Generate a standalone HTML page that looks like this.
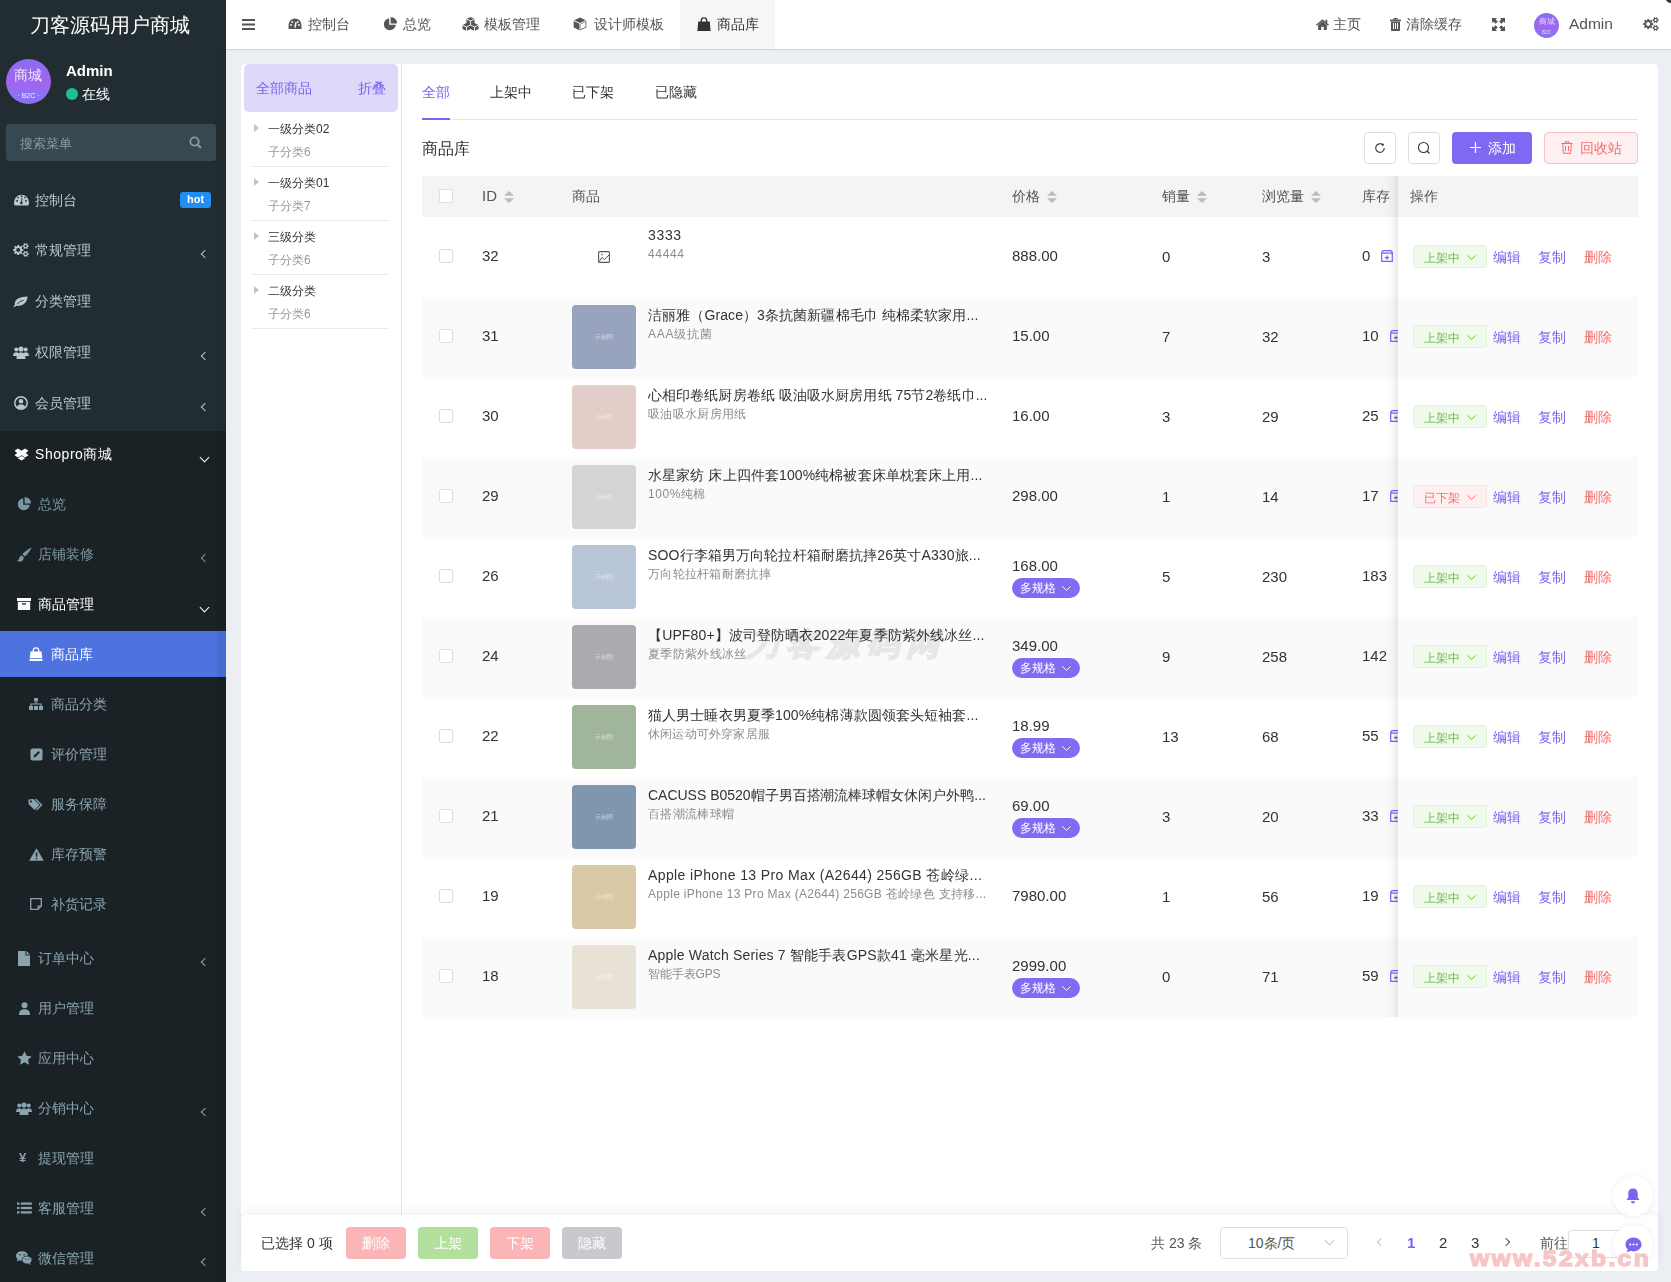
<!DOCTYPE html>
<html><head><meta charset="utf-8">
<style>
*{box-sizing:border-box;margin:0;padding:0}
html,body{width:1671px;height:1282px;overflow:hidden}
body{position:relative;background:#ebeef3;font-family:"Liberation Sans",sans-serif;font-size:14px;color:#333}
.a{position:absolute}
.t{position:absolute;white-space:nowrap}
svg{display:block}
#sb{left:0;top:0;width:226px;height:1282px;background:#222d32}
#sb .dk{left:0;top:431px;width:226px;height:851px;background:#1a2226}
#sb .strip{left:217px;top:49px;width:9px;height:1233px;background:rgba(0,0,0,.055)}
.chev{position:absolute;width:6px;height:6px;border-left:1.5px solid #b8c7ce;border-bottom:1.5px solid #b8c7ce;transform:rotate(45deg)}
.chevd{position:absolute;width:7px;height:7px;border-left:1.8px solid #fff;border-bottom:1.8px solid #fff;transform:rotate(-45deg)}
#nav{left:226px;top:0;width:1445px;height:49px;background:#fff;box-shadow:0 1px 1px rgba(0,0,0,.1)}
.cb{position:absolute;width:14px;height:14px;border:1px solid #dcdfe6;border-radius:2px;background:#fff}
.img{position:absolute;width:64px;height:64px;border-radius:4px}
.img span{position:absolute;left:0;top:26px;width:64px;text-align:center;font-size:6px;color:rgba(255,255,255,.55);line-height:12px}
.tag{position:absolute;height:20px;width:68px;border-radius:10px;background:#7f6cf3;color:#fff;font-size:12px;line-height:20px;padding-left:8px}
.tag svg{position:absolute;left:50px;top:8px}
.st{position:absolute;width:74px;height:23px;border-radius:3px;font-size:12px;line-height:24px;padding-left:10px}
.st.on{background:#f0f9eb;border:1px solid #e1f3d8;color:#67c23a}
.st.off{background:#fef0f0;border:1px solid #fde2e2;color:#f56c6c}
.st svg{position:absolute;left:53px;top:8.5px}

</style></head><body>

<div id="sb" class="a">
<div class="a dk"></div>
<div class="t " style="left:30px;top:13.0px;line-height:24px;height:24px;font-size:20px;color:#fff">刀客源码用户商城</div>
<div class="a" style="left:6px;top:59px;width:45px;height:45px;border-radius:50%;background:linear-gradient(180deg,#8b6cf1 0%,#a265ee 60%,#b061ec 64%,#8f70f3 66%,#8a6ff2 100%);overflow:hidden">
<div class="t" style="left:8px;top:8px;font-size:14px;line-height:16px;height:16px;color:rgba(255,255,255,.85)">商城</div>
<div class="t" style="left:0;top:32px;width:45px;text-align:center;font-size:7px;line-height:9px;height:9px;color:rgba(255,255,255,.9)">·&nbsp;B2C&nbsp;·</div>
</div>
<div class="t " style="left:66px;top:61.0px;line-height:20px;height:20px;font-weight:bold;color:#fff;font-size:15px">Admin</div>
<div class="a" style="left:66px;top:88px;width:12px;height:12px;border-radius:50%;background:#1fbf94"></div>
<div class="t " style="left:82px;top:84.0px;line-height:20px;height:20px;color:#fff;font-size:14px">在线</div>
<div class="a" style="left:6px;top:124px;width:210px;height:37px;background:#374850;border-radius:3px"></div>
<div class="t " style="left:20px;top:134.0px;line-height:20px;height:20px;color:#8b9ba2;font-size:13px">搜索菜单</div>
<svg class="a" style="left:189px;top:136px" width="13" height="13" viewBox="0 0 13 13"><circle cx="5.5" cy="5.5" r="4.2" fill="none" stroke="#8b9ba2" stroke-width="1.8"/><path d="M8.5 8.5 L12 12" stroke="#8b9ba2" stroke-width="2"/></svg>
<div class="a" style="left:0;top:631px;width:226px;height:46px;background:#4e73df"></div>
<div class="a strip"></div>
<div class="a" style="left:13.6px;top:193.5px"><svg width="15" height="12" viewBox="0 0 15 12"><path d="M0.6 11.4 C0.2 10.4 0 9.4 0 8.2 A7.5 7.5 0 0 1 15 8.2 C15 9.4 14.8 10.4 14.4 11.4z" fill="#b8c7ce"/><rect x="6.8" y="1.4" width="1.4" height="1.8" fill="#222d32"/><rect x="2.2" y="6.2" width="1.8" height="1.4" fill="#222d32"/><rect x="11" y="6.2" width="1.8" height="1.4" fill="#222d32"/><circle cx="4" cy="3.6" r="0.8" fill="#222d32"/><circle cx="11" cy="3.6" r="0.8" fill="#222d32"/><path d="M7.5 9 L8 4.2" stroke="#222d32" stroke-width="0.9"/><circle cx="7.4" cy="9" r="1.3" fill="#222d32"/></svg></div>
<div class="t " style="left:35px;top:189.5px;line-height:20px;height:20px;color:#b8c7ce;font-size:14px">控制台</div>
<div class="a" style="left:180px;top:192px;width:31px;height:16px;border-radius:3px;background:#1f8ff4;color:#fff;font-weight:bold;font-size:11px;line-height:14px;text-align:center">hot</div>
<div class="a" style="left:13px;top:243.0px"><svg width="16" height="14" viewBox="0 0 16 14"><path fill-rule="evenodd" d="M10.3 6.0 L10.3 8.0 L9.0 8.1 L8.4 9.2 L9.5 9.9 L8.1 11.3 L7.1 10.4 L6.0 10.8 L6.2 12.1 L4.2 12.1 L4.1 10.8 L3.0 10.2 L2.3 11.3 L0.9 9.9 L1.8 8.9 L1.4 7.8 L0.1 8.0 L0.1 6.0 L1.4 5.9 L2.0 4.8 L0.9 4.1 L2.3 2.7 L3.3 3.6 L4.4 3.2 L4.2 1.9 L6.2 1.9 L6.3 3.2 L7.4 3.8 L8.1 2.7 L9.5 4.1 L8.6 5.1 L9.0 6.2z M7.2 7.0 A2.0 2.0 0 1 0 3.2 7.0 A2.0 2.0 0 1 0 7.2 7.0z" fill="#b8c7ce"/><path fill-rule="evenodd" d="M15.6 2.3 L15.6 3.9 L14.7 3.9 L14.2 4.7 L14.8 5.3 L13.4 6.1 L12.9 5.3 L12.0 5.2 L11.8 6.1 L10.4 5.3 L10.9 4.5 L10.5 3.7 L9.6 3.9 L9.6 2.3 L10.5 2.3 L11.0 1.5 L10.4 0.9 L11.8 0.1 L12.3 0.9 L13.2 1.0 L13.4 0.1 L14.8 0.9 L14.3 1.7 L14.7 2.5z M13.7 3.1 A1.1 1.1 0 1 0 11.5 3.1 A1.1 1.1 0 1 0 13.7 3.1z" fill="#b8c7ce"/><path fill-rule="evenodd" d="M15.6 10.1 L15.6 11.7 L14.7 11.7 L14.2 12.5 L14.8 13.1 L13.4 13.9 L12.9 13.1 L12.0 13.0 L11.8 13.9 L10.4 13.1 L10.9 12.3 L10.5 11.5 L9.6 11.7 L9.6 10.1 L10.5 10.1 L11.0 9.3 L10.4 8.7 L11.8 7.9 L12.3 8.7 L13.2 8.8 L13.4 7.9 L14.8 8.7 L14.3 9.5 L14.7 10.3z M13.7 10.9 A1.1 1.1 0 1 0 11.5 10.9 A1.1 1.1 0 1 0 13.7 10.9z" fill="#b8c7ce"/></svg></div>
<div class="t " style="left:35px;top:240.0px;line-height:20px;height:20px;color:#b8c7ce;font-size:14px">常规管理</div>
<div class="chev" style="left:202px;top:251px;border-color:#b8c7ce"></div>
<div class="a" style="left:13.4px;top:295.5px"><svg width="15" height="11" viewBox="0 0 15 11"><path d="M0.3 10.6 L1.8 9 C1.2 4.5 5 0.8 14.6 0.6 C14.4 5.8 10.8 10.6 3.6 9.8 L1.6 10.9z" fill="#b8c7ce"/><path d="M4.2 8.2 C5.8 6 7.6 5 10.6 4.4" stroke="#222d32" stroke-width="0.9" fill="none"/></svg></div>
<div class="t " style="left:35px;top:291.0px;line-height:20px;height:20px;color:#b8c7ce;font-size:14px">分类管理</div>
<div class="a" style="left:13px;top:345.5px"><svg width="16" height="13" viewBox="0 0 16 13"><circle cx="3.3" cy="3.6" r="2" fill="#b8c7ce"/><circle cx="12.7" cy="3.6" r="2" fill="#b8c7ce"/><path d="M0 10 C0 7 1.5 6.2 3.5 6.2 C5 6.2 5.5 7 5.5 10z M16 10 C16 7 14.5 6.2 12.5 6.2 C11 6.2 10.5 7 10.5 10z" fill="#b8c7ce"/><circle cx="8" cy="3" r="2.6" fill="#b8c7ce"/><path d="M3.5 13 C3.5 8 5 6.6 8 6.6 C11 6.6 12.5 8 12.5 13z" fill="#b8c7ce"/></svg></div>
<div class="t " style="left:35px;top:342.0px;line-height:20px;height:20px;color:#b8c7ce;font-size:14px">权限管理</div>
<div class="chev" style="left:202px;top:353px;border-color:#b8c7ce"></div>
<div class="a" style="left:14px;top:396.0px"><svg width="14" height="14" viewBox="0 0 14 14"><circle cx="7" cy="7" r="6.2" fill="none" stroke="#b8c7ce" stroke-width="1.5"/><circle cx="7" cy="5.3" r="2.3" fill="#b8c7ce"/><path d="M2.8 11.3 C3.6 9 5 8.6 7 8.6 C9 8.6 10.4 9 11.2 11.3 C10 12.5 8.6 13 7 13 C5.4 13 4 12.5 2.8 11.3z" fill="#b8c7ce"/></svg></div>
<div class="t " style="left:35px;top:393.0px;line-height:20px;height:20px;color:#b8c7ce;font-size:14px">会员管理</div>
<div class="chev" style="left:202px;top:404px;border-color:#b8c7ce"></div>
<div class="a" style="left:14px;top:447.5px"><svg width="15" height="13" viewBox="0 0 15 13"><path d="M4 0.5 L0.5 2.8 L3.2 5 L0.5 7.2 L4 9.4 L7.5 7.2 L4.8 5 L7.5 2.8z M11 0.5 L7.5 2.8 L10.2 5 L7.5 7.2 L11 9.4 L14.5 7.2 L11.8 5 L14.5 2.8z M7.5 2.8 L10.2 5 L7.5 7.2 L4.8 5z" fill="#fff"/><path d="M3.8 10.2 L7.5 8 L11.2 10.2 L7.5 12.6z" fill="#fff"/></svg></div>
<div class="t " style="left:35px;top:444.0px;line-height:20px;height:20px;color:#fff;font-size:14px;letter-spacing:0.55px">Shopro商城</div>
<div class="chevd" style="left:201px;top:454px"></div>
<div class="a" style="left:17px;top:497.0px"><svg width="14" height="14" viewBox="0 0 14 14"><path d="M6.2 1.2 A6 6 0 1 0 12.8 7.8 L6.2 7.8z" fill="#7b96a3"/><path d="M7.6 0 A6.4 6.4 0 0 1 14 6.4 L7.6 6.4z" fill="#7b96a3"/></svg></div>
<div class="t " style="left:38px;top:494.0px;line-height:20px;height:20px;color:#7b96a3;font-size:14px">总览</div>
<div class="a" style="left:16.5px;top:546.5px"><svg width="15" height="15" viewBox="0 0 15 15"><path d="M14.6 0.6 C13.8 2.8 10.6 7.2 8 9.6 L5.4 7.2 C8 4.6 12.4 1.4 14.6 0.6z" fill="#7b96a3"/><path d="M5 8.6 L6.8 10.2 C6.8 13.2 4.8 14.6 2.8 14.6 C1.4 14.6 0.4 13.8 0.2 13.2 C1.6 13.2 2 12.4 2.3 11 C2.6 9.6 3.6 8.6 5 8.6z" fill="#7b96a3"/></svg></div>
<div class="t " style="left:38px;top:544.0px;line-height:20px;height:20px;color:#7b96a3;font-size:14px">店铺装修</div>
<div class="chev" style="left:202px;top:555px;border-color:#7b96a3"></div>
<div class="a" style="left:17px;top:598.0px"><svg width="14" height="12" viewBox="0 0 14 12"><rect x="0" y="0" width="14" height="3" fill="#fff"/><rect x="0.8" y="3.8" width="12.4" height="8.2" fill="#fff"/><rect x="5" y="5.3" width="4" height="1.3" fill="#1a2226"/></svg></div>
<div class="t " style="left:38px;top:594.0px;line-height:20px;height:20px;color:#fff;font-size:14px">商品管理</div>
<div class="chevd" style="left:201px;top:604px"></div>
<div class="a" style="left:29px;top:647.0px"><svg width="14" height="14" viewBox="0 0 14 14"><path d="M4.3 5 V3.6 A2.7 2.7 0 0 1 9.7 3.6 V5" stroke="#fff" stroke-width="1.3" fill="none"/><path d="M1.5 4.5 H12.5 L13.5 14 H0.5z" fill="#fff"/><rect x="0.6" y="11" width="12.8" height="0.8" fill="#4e73df"/></svg></div>
<div class="t " style="left:51px;top:644.0px;line-height:20px;height:20px;color:#fff;font-size:14px">商品库</div>
<div class="a" style="left:29px;top:698.0px"><svg width="14" height="12" viewBox="0 0 14 12"><rect x="5" y="0" width="4" height="3.5" fill="#8aa4af"/><path d="M7 3.5 V6 M2 8.5 V6 H12 V8.5" stroke="#8aa4af" stroke-width="1.2" fill="none"/><rect x="0" y="8" width="4" height="4" fill="#8aa4af"/><rect x="5" y="8" width="4" height="4" fill="#8aa4af"/><rect x="10" y="8" width="4" height="4" fill="#8aa4af"/></svg></div>
<div class="t " style="left:51px;top:694.0px;line-height:20px;height:20px;color:#8aa4af;font-size:14px">商品分类</div>
<div class="a" style="left:30px;top:747.5px"><svg width="13" height="13" viewBox="0 0 13 13"><rect x="0.5" y="0.5" width="12" height="12" rx="2" fill="#8aa4af"/><path d="M3.5 9.5 L4 7.5 L8.5 3 L10 4.5 L5.5 9z" fill="#1a2226"/></svg></div>
<div class="t " style="left:51px;top:744.0px;line-height:20px;height:20px;color:#8aa4af;font-size:14px">评价管理</div>
<div class="a" style="left:28px;top:797.5px"><svg width="16" height="13" viewBox="0 0 16 13"><path d="M0.5 1.5 V6 L6.5 12 L11.5 7 L5.5 1z" fill="#8aa4af"/><circle cx="3" cy="3.5" r="1.1" fill="#1a2226"/><path d="M7.5 1 L13.5 7 L8.5 12" stroke="#8aa4af" stroke-width="1.4" fill="none"/></svg></div>
<div class="t " style="left:51px;top:794.0px;line-height:20px;height:20px;color:#8aa4af;font-size:14px">服务保障</div>
<div class="a" style="left:29px;top:847.5px"><svg width="15" height="13" viewBox="0 0 15 13"><path d="M7.5 0.3 L14.8 12.8 H0.2z" fill="#8aa4af"/><rect x="6.8" y="4.3" width="1.5" height="4.5" fill="#1a2226"/><rect x="6.8" y="9.8" width="1.5" height="1.5" fill="#1a2226"/></svg></div>
<div class="t " style="left:51px;top:844.0px;line-height:20px;height:20px;color:#8aa4af;font-size:14px">库存预警</div>
<div class="a" style="left:30px;top:898.0px"><svg width="12" height="12" viewBox="0 0 12 12"><path d="M0.7 0.7 H11.3 V8 L8 11.3 H0.7z" fill="none" stroke="#8aa4af" stroke-width="1.3"/><path d="M11 8.2 H8.2 V11" fill="none" stroke="#8aa4af" stroke-width="1.2"/></svg></div>
<div class="t " style="left:51px;top:894.0px;line-height:20px;height:20px;color:#8aa4af;font-size:14px">补货记录</div>
<div class="a" style="left:18px;top:950.5px"><svg width="12" height="15" viewBox="0 0 12 15"><path d="M0 0 H7.5 V4.5 H12 V15 H0z" fill="#8aa4af"/><path d="M8.5 0 L12 3.5 H8.5z" fill="#8aa4af"/></svg></div>
<div class="t " style="left:38px;top:948.0px;line-height:20px;height:20px;color:#8aa4af;font-size:14px">订单中心</div>
<div class="chev" style="left:202px;top:959px;border-color:#8aa4af"></div>
<div class="a" style="left:19px;top:1001.5px"><svg width="11" height="13" viewBox="0 0 11 13"><circle cx="5.5" cy="3.2" r="3" fill="#8aa4af"/><path d="M0 13 C0 8.5 2 7.2 5.5 7.2 C9 7.2 11 8.5 11 13z" fill="#8aa4af"/></svg></div>
<div class="t " style="left:38px;top:998.0px;line-height:20px;height:20px;color:#8aa4af;font-size:14px">用户管理</div>
<div class="a" style="left:17px;top:1051.0px"><svg width="15" height="14" viewBox="0 0 15 14"><path d="M7.5 0.3 L9.7 4.8 L14.7 5.4 L11 8.8 L12 13.7 L7.5 11.3 L3 13.7 L4 8.8 L0.3 5.4 L5.3 4.8z" fill="#8aa4af"/></svg></div>
<div class="t " style="left:38px;top:1048.0px;line-height:20px;height:20px;color:#8aa4af;font-size:14px">应用中心</div>
<div class="a" style="left:16px;top:1101.5px"><svg width="16" height="13" viewBox="0 0 16 13"><circle cx="3.3" cy="3.6" r="2" fill="#8aa4af"/><circle cx="12.7" cy="3.6" r="2" fill="#8aa4af"/><path d="M0 10 C0 7 1.5 6.2 3.5 6.2 C5 6.2 5.5 7 5.5 10z M16 10 C16 7 14.5 6.2 12.5 6.2 C11 6.2 10.5 7 10.5 10z" fill="#8aa4af"/><circle cx="8" cy="3" r="2.6" fill="#8aa4af"/><path d="M3.5 13 C3.5 8 5 6.6 8 6.6 C11 6.6 12.5 8 12.5 13z" fill="#8aa4af"/></svg></div>
<div class="t " style="left:38px;top:1098.0px;line-height:20px;height:20px;color:#8aa4af;font-size:14px">分销中心</div>
<div class="chev" style="left:202px;top:1109px;border-color:#8aa4af"></div>
<div class="t " style="left:19px;top:1148.0px;line-height:20px;height:20px;color:#8aa4af;font-size:13px;font-weight:bold">¥</div>
<div class="t " style="left:38px;top:1148.0px;line-height:20px;height:20px;color:#8aa4af;font-size:14px">提现管理</div>
<div class="a" style="left:17px;top:1202.0px"><svg width="15" height="12" viewBox="0 0 15 12"><rect x="0" y="0.5" width="2.5" height="2.2" fill="#8aa4af"/><rect x="0" y="4.9" width="2.5" height="2.2" fill="#8aa4af"/><rect x="0" y="9.3" width="2.5" height="2.2" fill="#8aa4af"/><rect x="3.8" y="0.5" width="11" height="2.2" fill="#8aa4af"/><rect x="3.8" y="4.9" width="11" height="2.2" fill="#8aa4af"/><rect x="3.8" y="9.3" width="11" height="2.2" fill="#8aa4af"/></svg></div>
<div class="t " style="left:38px;top:1198.0px;line-height:20px;height:20px;color:#8aa4af;font-size:14px">客服管理</div>
<div class="chev" style="left:202px;top:1209px;border-color:#8aa4af"></div>
<div class="a" style="left:16px;top:1251.0px"><svg width="16" height="14" viewBox="0 0 16 14"><ellipse cx="6" cy="5" rx="6" ry="4.8" fill="#8aa4af"/><path d="M1.5 8 L1 10.5 L4 9z" fill="#8aa4af"/><ellipse cx="11" cy="9" rx="5" ry="4" fill="#8aa4af" stroke="#1a2226" stroke-width="0.8"/><path d="M14 12 L15 14 L12 12.5z" fill="#8aa4af"/><circle cx="4" cy="3.8" r="0.8" fill="#1a2226"/><circle cx="8" cy="3.8" r="0.8" fill="#1a2226"/><circle cx="9.5" cy="8" r="0.6" fill="#1a2226"/><circle cx="12.5" cy="8" r="0.6" fill="#1a2226"/></svg></div>
<div class="t " style="left:38px;top:1248.0px;line-height:20px;height:20px;color:#8aa4af;font-size:14px">微信管理</div>
<div class="chev" style="left:202px;top:1259px;border-color:#8aa4af"></div>
</div>
<div id="nav" class="a"></div>
<div class="a" style="left:680px;top:0;width:95px;height:49px;background:#f6f6f6"></div>
<div class="a" style="left:242px;top:18.5px"><svg width="13" height="11" viewBox="0 0 13 11"><rect y="0" width="13" height="2" fill="#555"/><rect y="4.5" width="13" height="2" fill="#555"/><rect y="9" width="13" height="2" fill="#555"/></svg></div>
<div class="a" style="left:288px;top:18.0px"><svg width="14" height="12" viewBox="0 0 15 13"><path d="M7.5 0.5A7 7 0 0 0 0.5 7.5v4.5h14V7.5A7 7 0 0 0 7.5 0.5z" fill="#555"/><path d="M7.5 10.5 L8.6 4.5" stroke="#fff" stroke-width="1.6"/><circle cx="3.2" cy="7.5" r="1" fill="#fff"/><circle cx="4.5" cy="4.2" r="1" fill="#fff"/><circle cx="11.8" cy="7.5" r="1" fill="#fff"/><circle cx="10.5" cy="4.2" r="1" fill="#fff"/></svg></div>
<div class="t " style="left:308px;top:14.0px;line-height:20px;height:20px;color:#555;font-size:14px">控制台</div>
<div class="a" style="left:383px;top:17.0px"><svg width="14" height="14" viewBox="0 0 14 14"><path d="M6.2 1.2 A6 6 0 1 0 12.8 7.8 L6.2 7.8z" fill="#555"/><path d="M7.6 0 A6.4 6.4 0 0 1 14 6.4 L7.6 6.4z" fill="#555"/></svg></div>
<div class="t " style="left:403px;top:14.0px;line-height:20px;height:20px;color:#555;font-size:14px">总览</div>
<div class="a" style="left:462px;top:17.0px"><svg width="17" height="14" viewBox="0 0 17 14"><path d="M8.5 0 L12.5 2 V6 L8.5 8 L4.5 6 V2z M4.5 6 L8.5 8 V12 L4.5 14 L0.5 12 V8z M12.5 6 L16.5 8 V12 L12.5 14 L8.5 12 V8z" fill="#555"/><path d="M4.5 2 L8.5 4 L12.5 2 M8.5 4 V8 M0.5 8 L4.5 10 L8.5 8 M4.5 10 V14 M8.5 8 L12.5 10 L16.5 8 M12.5 10 V14" stroke="#fff" stroke-width="0.9" fill="none"/></svg></div>
<div class="t " style="left:484px;top:14.0px;line-height:20px;height:20px;color:#555;font-size:14px">模板管理</div>
<div class="a" style="left:573px;top:17.0px"><svg width="14" height="14" viewBox="0 0 14 14"><path d="M7 0.5 L13.3 3.5 V10.5 L7 13.5 L0.7 10.5 V3.5z" fill="#555"/><path d="M0.7 3.5 L7 6.5 L13.3 3.5 M7 6.5 V13.5" stroke="#fff" stroke-width="1" fill="none"/><path d="M7.8 7.2 L12.5 5 V10 L7.8 12.3z" fill="#fff"/></svg></div>
<div class="t " style="left:594px;top:14.0px;line-height:20px;height:20px;color:#555;font-size:14px">设计师模板</div>
<div class="a" style="left:697px;top:17.0px"><svg width="14" height="14" viewBox="0 0 14 14"><path d="M4.3 5 V3.6 A2.7 2.7 0 0 1 9.7 3.6 V5" stroke="#333" stroke-width="1.4" fill="none"/><path d="M1.2 4.6 H12.8 L13.6 14 H0.4z" fill="#333"/></svg></div>
<div class="t " style="left:717px;top:14.0px;line-height:20px;height:20px;color:#333;font-size:14px">商品库</div>
<div class="a" style="left:1316px;top:18.5px"><svg width="13" height="11" viewBox="0 0 13 11"><path d="M6.5 0.3 L13 5.8 L12 6.8 L6.5 2.2 L1 6.8 L0 5.8z" fill="#555"/><path d="M2.2 6 L6.5 2.6 L10.8 6 V11 H7.8 V7.8 H5.2 V11 H2.2z" fill="#555"/><rect x="9.5" y="0.8" width="1.8" height="3" fill="#555"/></svg></div>
<div class="t " style="left:1333px;top:14.0px;line-height:20px;height:20px;color:#555;font-size:14px">主页</div>
<div class="a" style="left:1390px;top:17.5px"><svg width="11" height="13" viewBox="0 0 11 13"><rect x="0" y="1.6" width="11" height="1.6" fill="#555"/><rect x="3.5" y="0" width="4" height="1.6" fill="#555"/><path d="M1 3.6 H10 V12 A1 1 0 0 1 9 13 H2 A1 1 0 0 1 1 12z" fill="#555"/><rect x="3" y="5" width="1" height="6" fill="#fff"/><rect x="5" y="5" width="1" height="6" fill="#fff"/><rect x="7" y="5" width="1" height="6" fill="#fff"/></svg></div>
<div class="t " style="left:1406px;top:14.0px;line-height:20px;height:20px;color:#555;font-size:14px">清除缓存</div>
<div class="a" style="left:1492px;top:17.5px"><svg width="13" height="13" viewBox="0 0 13 13"><path d="M0 0 H5 L3.6 1.4 L5.8 3.6 L3.6 5.8 L1.4 3.6 L0 5z M13 0 V5 L11.6 3.6 L9.4 5.8 L7.2 3.6 L9.4 1.4 L8 0z M0 13 V8 L1.4 9.4 L3.6 7.2 L5.8 9.4 L3.6 11.6 L5 13z M13 13 H8 L9.4 11.6 L7.2 9.4 L9.4 7.2 L11.6 9.4 L13 8z" fill="#555"/></svg></div>
<div class="a" style="left:1534px;top:13px;width:25px;height:25px;border-radius:50%;overflow:hidden;background:linear-gradient(180deg,#8b6cf1 0%,#a265ee 62%,#b061ec 66%,#8f70f3 68%,#8a6ff2 100%)">
<div class="t" style="left:4.5px;top:4px;font-size:8px;line-height:10px;height:10px;color:rgba(255,255,255,.75)">商城</div><div class="t" style="left:0;top:16px;width:25px;text-align:center;font-size:5px;line-height:6px;height:6px;color:rgba(255,255,255,.7)">B2C</div></div>
<div class="t " style="left:1569px;top:13.5px;line-height:20px;height:20px;color:#555;font-size:15.5px">Admin</div>
<div class="a" style="left:1643px;top:17.0px"><svg width="16" height="14" viewBox="0 0 16 14"><path fill-rule="evenodd" d="M10.3 6.0 L10.3 8.0 L9.0 8.1 L8.4 9.2 L9.5 9.9 L8.1 11.3 L7.1 10.4 L6.0 10.8 L6.2 12.1 L4.2 12.1 L4.1 10.8 L3.0 10.2 L2.3 11.3 L0.9 9.9 L1.8 8.9 L1.4 7.8 L0.1 8.0 L0.1 6.0 L1.4 5.9 L2.0 4.8 L0.9 4.1 L2.3 2.7 L3.3 3.6 L4.4 3.2 L4.2 1.9 L6.2 1.9 L6.3 3.2 L7.4 3.8 L8.1 2.7 L9.5 4.1 L8.6 5.1 L9.0 6.2z M7.2 7.0 A2.0 2.0 0 1 0 3.2 7.0 A2.0 2.0 0 1 0 7.2 7.0z" fill="#555"/><path fill-rule="evenodd" d="M15.6 2.3 L15.6 3.9 L14.7 3.9 L14.2 4.7 L14.8 5.3 L13.4 6.1 L12.9 5.3 L12.0 5.2 L11.8 6.1 L10.4 5.3 L10.9 4.5 L10.5 3.7 L9.6 3.9 L9.6 2.3 L10.5 2.3 L11.0 1.5 L10.4 0.9 L11.8 0.1 L12.3 0.9 L13.2 1.0 L13.4 0.1 L14.8 0.9 L14.3 1.7 L14.7 2.5z M13.7 3.1 A1.1 1.1 0 1 0 11.5 3.1 A1.1 1.1 0 1 0 13.7 3.1z" fill="#555"/><path fill-rule="evenodd" d="M15.6 10.1 L15.6 11.7 L14.7 11.7 L14.2 12.5 L14.8 13.1 L13.4 13.9 L12.9 13.1 L12.0 13.0 L11.8 13.9 L10.4 13.1 L10.9 12.3 L10.5 11.5 L9.6 11.7 L9.6 10.1 L10.5 10.1 L11.0 9.3 L10.4 8.7 L11.8 7.9 L12.3 8.7 L13.2 8.8 L13.4 7.9 L14.8 8.7 L14.3 9.5 L14.7 10.3z M13.7 10.9 A1.1 1.1 0 1 0 11.5 10.9 A1.1 1.1 0 1 0 13.7 10.9z" fill="#555"/></svg></div>
<div class="a" style="left:241px;top:64px;width:161px;height:1151px;background:#fff;border-radius:4px 0 0 0;border-right:1px solid #e2e2e2"></div>
<div class="a" style="left:244px;top:64px;width:154px;height:48px;background:#ded8f9;border-radius:5px"></div>
<div class="t " style="left:256px;top:78.0px;line-height:20px;height:20px;color:#7b62f0;font-size:14px">全部商品</div>
<div class="t " style="left:358px;top:78.0px;line-height:20px;height:20px;color:#7b62f0;font-size:14px">折叠</div>
<div class="a" style="left:254px;top:123.5px;width:0;height:0;border-left:5px solid #c0c4cc;border-top:4.5px solid transparent;border-bottom:4.5px solid transparent"></div>
<div class="t " style="left:268px;top:119.0px;line-height:20px;height:20px;color:#333;font-size:12px">一级分类02</div>
<div class="t " style="left:268px;top:142.0px;line-height:20px;height:20px;color:#999;font-size:12px">子分类6</div>
<div class="a" style="left:251px;top:166px;width:138px;height:1px;background:#ebebeb"></div>
<div class="a" style="left:254px;top:177.5px;width:0;height:0;border-left:5px solid #c0c4cc;border-top:4.5px solid transparent;border-bottom:4.5px solid transparent"></div>
<div class="t " style="left:268px;top:173.0px;line-height:20px;height:20px;color:#333;font-size:12px">一级分类01</div>
<div class="t " style="left:268px;top:196.0px;line-height:20px;height:20px;color:#999;font-size:12px">子分类7</div>
<div class="a" style="left:251px;top:220px;width:138px;height:1px;background:#ebebeb"></div>
<div class="a" style="left:254px;top:231.5px;width:0;height:0;border-left:5px solid #c0c4cc;border-top:4.5px solid transparent;border-bottom:4.5px solid transparent"></div>
<div class="t " style="left:268px;top:227.0px;line-height:20px;height:20px;color:#333;font-size:12px">三级分类</div>
<div class="t " style="left:268px;top:250.0px;line-height:20px;height:20px;color:#999;font-size:12px">子分类6</div>
<div class="a" style="left:251px;top:274px;width:138px;height:1px;background:#ebebeb"></div>
<div class="a" style="left:254px;top:285.5px;width:0;height:0;border-left:5px solid #c0c4cc;border-top:4.5px solid transparent;border-bottom:4.5px solid transparent"></div>
<div class="t " style="left:268px;top:281.0px;line-height:20px;height:20px;color:#333;font-size:12px">二级分类</div>
<div class="t " style="left:268px;top:304.0px;line-height:20px;height:20px;color:#999;font-size:12px">子分类6</div>
<div class="a" style="left:251px;top:328px;width:138px;height:1px;background:#ebebeb"></div>
<div class="a" style="left:402px;top:64px;width:1256px;height:1151px;background:#fff;border-radius:0 4px 0 0"></div>
<div class="t " style="left:422px;top:82.0px;line-height:20px;height:20px;color:#7b62f0;font-size:14px">全部</div>
<div class="t " style="left:490px;top:82.0px;line-height:20px;height:20px;color:#333;font-size:14px">上架中</div>
<div class="t " style="left:572px;top:82.0px;line-height:20px;height:20px;color:#333;font-size:14px">已下架</div>
<div class="t " style="left:655px;top:82.0px;line-height:20px;height:20px;color:#333;font-size:14px">已隐藏</div>
<div class="a" style="left:422px;top:119px;width:1216px;height:1px;background:#e4e7ed"></div>
<div class="a" style="left:422px;top:118px;width:28px;height:2px;background:#7b62f0"></div>
<div class="t " style="left:422px;top:139.0px;line-height:20px;height:20px;color:#333;font-size:16px">商品库</div>
<div class="a" style="left:1364px;top:132px;width:32px;height:32px;border:1px solid #dcdfe6;border-radius:4px;background:#fff"></div>
<svg class="a" style="left:1374px;top:142px" width="12" height="12" viewBox="0 0 12 12"><path d="M10.3 6 A4.3 4.3 0 1 1 8.6 2.6" fill="none" stroke="#333" stroke-width="1.1"/><path d="M7.2 1 L10.2 2.2 L8.6 4.6z" fill="#333"/></svg>
<div class="a" style="left:1408px;top:132px;width:32px;height:32px;border:1px solid #dcdfe6;border-radius:4px;background:#fff"></div>
<svg class="a" style="left:1417px;top:141px" width="14" height="14" viewBox="0 0 14 14"><circle cx="6.5" cy="6.5" r="5" fill="none" stroke="#333" stroke-width="1.1"/><path d="M10 10 L12.5 12.5" stroke="#333" stroke-width="1.1"/></svg>
<div class="a" style="left:1452px;top:132px;width:80px;height:32px;border-radius:4px;background:#7f69f2"></div>
<svg class="a" style="left:1470px;top:142px" width="11" height="11" viewBox="0 0 11 11"><path d="M5.5 0 V11 M0 5.5 H11" stroke="#fff" stroke-width="1.2"/></svg>
<div class="t " style="left:1488px;top:138.0px;line-height:20px;height:20px;color:#fff;font-size:14px">添加</div>
<div class="a" style="left:1544px;top:132px;width:94px;height:32px;border:1px solid #fbc4c4;border-radius:4px;background:#fef0f0"></div>
<svg class="a" style="left:1561px;top:141px" width="12" height="13" viewBox="0 0 12 13"><path d="M0.5 2.5 H11.5 M4 2.5 V0.8 H8 V2.5 M1.8 2.5 L2.3 12.3 H9.7 L10.2 2.5 M4.5 5 V10 M7.5 5 V10" fill="none" stroke="#f56c6c" stroke-width="1"/></svg>
<div class="t " style="left:1580px;top:138.0px;line-height:20px;height:20px;color:#f56c6c;font-size:14px">回收站</div>
<div class="a" style="left:422px;top:176px;width:1216px;height:41px;background:#f4f4f4"></div>
<div class="cb" style="left:439px;top:189px"></div>
<div class="t " style="left:482px;top:186.0px;line-height:20px;height:20px;color:#555;font-size:15px">ID</div>
<svg class="a" style="left:504px;top:191px" width="10" height="12" viewBox="0 0 10 12"><path d="M5 0 L10 4.8 H0z M0 7.2 H10 L5 12z" fill="#bbbbbb"/></svg>
<div class="t " style="left:572px;top:186.0px;line-height:20px;height:20px;color:#555;font-size:14px">商品</div>
<div class="t " style="left:1012px;top:186.0px;line-height:20px;height:20px;color:#555;font-size:14px">价格</div>
<svg class="a" style="left:1047px;top:191px" width="10" height="12" viewBox="0 0 10 12"><path d="M5 0 L10 4.8 H0z M0 7.2 H10 L5 12z" fill="#bbbbbb"/></svg>
<div class="t " style="left:1162px;top:186.0px;line-height:20px;height:20px;color:#555;font-size:14px">销量</div>
<svg class="a" style="left:1197px;top:191px" width="10" height="12" viewBox="0 0 10 12"><path d="M5 0 L10 4.8 H0z M0 7.2 H10 L5 12z" fill="#bbbbbb"/></svg>
<div class="t " style="left:1262px;top:186.0px;line-height:20px;height:20px;color:#555;font-size:14px">浏览量</div>
<svg class="a" style="left:1311px;top:191px" width="10" height="12" viewBox="0 0 10 12"><path d="M5 0 L10 4.8 H0z M0 7.2 H10 L5 12z" fill="#bbbbbb"/></svg>
<div class="t " style="left:1362px;top:186.0px;line-height:20px;height:20px;color:#555;font-size:14px">库存</div>
<div class="cb" style="left:439px;top:249px"></div>
<div class="t " style="left:482px;top:246.0px;line-height:20px;height:20px;color:#333;font-size:15px">32</div>
<svg class="a" style="left:598px;top:251px" width="12" height="12" viewBox="0 0 12 12"><rect x="0.6" y="0.6" width="10.8" height="10.8" rx="1" fill="none" stroke="#555" stroke-width="1.1"/><path d="M1 10.5 L4 6.5 L6.5 8.5 L11 4" fill="none" stroke="#555" stroke-width="1"/><circle cx="4" cy="3.5" r="0.8" fill="#555"/></svg>
<div class="t " style="left:648px;top:225.0px;line-height:20px;height:20px;color:#333;font-size:14px;letter-spacing:0.667px">3333</div>
<div class="t " style="left:648px;top:244.0px;line-height:20px;height:20px;color:#8c8c8c;font-size:12px;letter-spacing:0.650px">44444</div>
<div class="t " style="left:1012px;top:246.0px;line-height:20px;height:20px;color:#333;font-size:15px">888.00</div>
<div class="t " style="left:1162px;top:246.5px;line-height:20px;height:20px;color:#333;font-size:15px">0</div>
<div class="t " style="left:1262px;top:246.5px;line-height:20px;height:20px;color:#333;font-size:15px">3</div>
<div class="t" style="left:1362px;top:246px;line-height:20px;height:20px;color:#333;font-size:15px">0<svg style="display:inline-block;vertical-align:-1px;margin-left:11px" width="12" height="12" viewBox="0 0 12 12"><path d="M0.7 3 V11.3 H11.3 V3 C11.3 1.5 10.5 0.7 9 0.7 H3 C1.5 0.7 0.7 1.5 0.7 3z M0.7 3.2 H11.3 M6 5.5 V9.8 M3.8 7.6 H8.2" fill="none" stroke="#7b62f0" stroke-width="1.2"/></svg></div>
<div class="a" style="left:422px;top:297px;width:1216px;height:80px;background:#fafafa"></div>
<div class="cb" style="left:439px;top:329px"></div>
<div class="t " style="left:482px;top:326.0px;line-height:20px;height:20px;color:#333;font-size:15px">31</div>
<div class="img" style="left:572px;top:305px;background:#98a3bd"><span>示例图</span></div>
<div class="t " style="left:648px;top:305.0px;line-height:20px;height:20px;color:#333;font-size:14px;letter-spacing:0.100px">洁丽雅（Grace）3条抗菌新疆棉毛巾 纯棉柔软家用...</div>
<div class="t " style="left:648px;top:324.0px;line-height:20px;height:20px;color:#8c8c8c;font-size:12px;letter-spacing:0.800px">AAA级抗菌</div>
<div class="t " style="left:1012px;top:326.0px;line-height:20px;height:20px;color:#333;font-size:15px">15.00</div>
<div class="t " style="left:1162px;top:326.5px;line-height:20px;height:20px;color:#333;font-size:15px">7</div>
<div class="t " style="left:1262px;top:326.5px;line-height:20px;height:20px;color:#333;font-size:15px">32</div>
<div class="t" style="left:1362px;top:326px;line-height:20px;height:20px;color:#333;font-size:15px">10<svg style="display:inline-block;vertical-align:-1px;margin-left:11px" width="12" height="12" viewBox="0 0 12 12"><path d="M0.7 3 V11.3 H11.3 V3 C11.3 1.5 10.5 0.7 9 0.7 H3 C1.5 0.7 0.7 1.5 0.7 3z M0.7 3.2 H11.3 M6 5.5 V9.8 M3.8 7.6 H8.2" fill="none" stroke="#7b62f0" stroke-width="1.2"/></svg></div>
<div class="cb" style="left:439px;top:409px"></div>
<div class="t " style="left:482px;top:406.0px;line-height:20px;height:20px;color:#333;font-size:15px">30</div>
<div class="img" style="left:572px;top:385px;background:#e2cdc8"><span>示例图</span></div>
<div class="t " style="left:648px;top:385.0px;line-height:20px;height:20px;color:#333;font-size:14px;letter-spacing:0.096px">心相印卷纸厨房卷纸 吸油吸水厨房用纸 75节2卷纸巾...</div>
<div class="t " style="left:648px;top:404.0px;line-height:20px;height:20px;color:#8c8c8c;font-size:12px;letter-spacing:0.314px">吸油吸水厨房用纸</div>
<div class="t " style="left:1012px;top:406.0px;line-height:20px;height:20px;color:#333;font-size:15px">16.00</div>
<div class="t " style="left:1162px;top:406.5px;line-height:20px;height:20px;color:#333;font-size:15px">3</div>
<div class="t " style="left:1262px;top:406.5px;line-height:20px;height:20px;color:#333;font-size:15px">29</div>
<div class="t" style="left:1362px;top:406px;line-height:20px;height:20px;color:#333;font-size:15px">25<svg style="display:inline-block;vertical-align:-1px;margin-left:11px" width="12" height="12" viewBox="0 0 12 12"><path d="M0.7 3 V11.3 H11.3 V3 C11.3 1.5 10.5 0.7 9 0.7 H3 C1.5 0.7 0.7 1.5 0.7 3z M0.7 3.2 H11.3 M6 5.5 V9.8 M3.8 7.6 H8.2" fill="none" stroke="#7b62f0" stroke-width="1.2"/></svg></div>
<div class="a" style="left:422px;top:457px;width:1216px;height:80px;background:#fafafa"></div>
<div class="cb" style="left:439px;top:489px"></div>
<div class="t " style="left:482px;top:486.0px;line-height:20px;height:20px;color:#333;font-size:15px">29</div>
<div class="img" style="left:572px;top:465px;background:#d5d4d2"><span>示例图</span></div>
<div class="t " style="left:648px;top:465.0px;line-height:20px;height:20px;color:#333;font-size:14px;letter-spacing:0.111px">水星家纺 床上四件套100%纯棉被套床单枕套床上用...</div>
<div class="t " style="left:648px;top:484.0px;line-height:20px;height:20px;color:#8c8c8c;font-size:12px;letter-spacing:0.560px">100%纯棉</div>
<div class="t " style="left:1012px;top:486.0px;line-height:20px;height:20px;color:#333;font-size:15px">298.00</div>
<div class="t " style="left:1162px;top:486.5px;line-height:20px;height:20px;color:#333;font-size:15px">1</div>
<div class="t " style="left:1262px;top:486.5px;line-height:20px;height:20px;color:#333;font-size:15px">14</div>
<div class="t" style="left:1362px;top:486px;line-height:20px;height:20px;color:#333;font-size:15px">17<svg style="display:inline-block;vertical-align:-1px;margin-left:11px" width="12" height="12" viewBox="0 0 12 12"><path d="M0.7 3 V11.3 H11.3 V3 C11.3 1.5 10.5 0.7 9 0.7 H3 C1.5 0.7 0.7 1.5 0.7 3z M0.7 3.2 H11.3 M6 5.5 V9.8 M3.8 7.6 H8.2" fill="none" stroke="#7b62f0" stroke-width="1.2"/></svg></div>
<div class="cb" style="left:439px;top:569px"></div>
<div class="t " style="left:482px;top:566.0px;line-height:20px;height:20px;color:#333;font-size:15px">26</div>
<div class="img" style="left:572px;top:545px;background:#b9c6d8"><span>示例图</span></div>
<div class="t " style="left:648px;top:545.0px;line-height:20px;height:20px;color:#333;font-size:14px;letter-spacing:0.132px">SOO行李箱男万向轮拉杆箱耐磨抗摔26英寸A330旅...</div>
<div class="t " style="left:648px;top:564.0px;line-height:20px;height:20px;color:#8c8c8c;font-size:12px;letter-spacing:0.278px">万向轮拉杆箱耐磨抗摔</div>
<div class="t " style="left:1012px;top:556.0px;line-height:20px;height:20px;color:#333;font-size:15px">168.00</div>
<div class="tag" style="left:1012px;top:578px">多规格<svg width="9" height="5" viewBox="0 0 9 5"><path d="M0.5 0.5 L4.5 4.3 L8.5 0.5" fill="none" stroke="#fff" stroke-width="1"/></svg></div>
<div class="t " style="left:1162px;top:566.5px;line-height:20px;height:20px;color:#333;font-size:15px">5</div>
<div class="t " style="left:1262px;top:566.5px;line-height:20px;height:20px;color:#333;font-size:15px">230</div>
<div class="t" style="left:1362px;top:566px;line-height:20px;height:20px;color:#333;font-size:15px">183<svg style="display:inline-block;vertical-align:-1px;margin-left:11px" width="12" height="12" viewBox="0 0 12 12"><path d="M0.7 3 V11.3 H11.3 V3 C11.3 1.5 10.5 0.7 9 0.7 H3 C1.5 0.7 0.7 1.5 0.7 3z M0.7 3.2 H11.3 M6 5.5 V9.8 M3.8 7.6 H8.2" fill="none" stroke="#7b62f0" stroke-width="1.2"/></svg></div>
<div class="a" style="left:422px;top:617px;width:1216px;height:80px;background:#fafafa"></div>
<div class="cb" style="left:439px;top:649px"></div>
<div class="t " style="left:482px;top:646.0px;line-height:20px;height:20px;color:#333;font-size:15px">24</div>
<div class="img" style="left:572px;top:625px;background:#a9abae"><span>示例图</span></div>
<div class="t " style="left:648px;top:625.0px;line-height:20px;height:20px;color:#333;font-size:14px;letter-spacing:0.134px">【UPF80+】波司登防晒衣2022年夏季防紫外线冰丝...</div>
<div class="t " style="left:648px;top:644.0px;line-height:20px;height:20px;color:#8c8c8c;font-size:12px;letter-spacing:0.314px">夏季防紫外线冰丝</div>
<div class="t " style="left:1012px;top:636.0px;line-height:20px;height:20px;color:#333;font-size:15px">349.00</div>
<div class="tag" style="left:1012px;top:658px">多规格<svg width="9" height="5" viewBox="0 0 9 5"><path d="M0.5 0.5 L4.5 4.3 L8.5 0.5" fill="none" stroke="#fff" stroke-width="1"/></svg></div>
<div class="t " style="left:1162px;top:646.5px;line-height:20px;height:20px;color:#333;font-size:15px">9</div>
<div class="t " style="left:1262px;top:646.5px;line-height:20px;height:20px;color:#333;font-size:15px">258</div>
<div class="t" style="left:1362px;top:646px;line-height:20px;height:20px;color:#333;font-size:15px">142<svg style="display:inline-block;vertical-align:-1px;margin-left:11px" width="12" height="12" viewBox="0 0 12 12"><path d="M0.7 3 V11.3 H11.3 V3 C11.3 1.5 10.5 0.7 9 0.7 H3 C1.5 0.7 0.7 1.5 0.7 3z M0.7 3.2 H11.3 M6 5.5 V9.8 M3.8 7.6 H8.2" fill="none" stroke="#7b62f0" stroke-width="1.2"/></svg></div>
<div class="cb" style="left:439px;top:729px"></div>
<div class="t " style="left:482px;top:726.0px;line-height:20px;height:20px;color:#333;font-size:15px">22</div>
<div class="img" style="left:572px;top:705px;background:#a1b59c"><span>示例图</span></div>
<div class="t " style="left:648px;top:705.0px;line-height:20px;height:20px;color:#333;font-size:14px;letter-spacing:0.115px">猫人男士睡衣男夏季100%纯棉薄款圆领套头短袖套...</div>
<div class="t " style="left:648px;top:724.0px;line-height:20px;height:20px;color:#8c8c8c;font-size:12px;letter-spacing:0.200px">休闲运动可外穿家居服</div>
<div class="t " style="left:1012px;top:716.0px;line-height:20px;height:20px;color:#333;font-size:15px">18.99</div>
<div class="tag" style="left:1012px;top:738px">多规格<svg width="9" height="5" viewBox="0 0 9 5"><path d="M0.5 0.5 L4.5 4.3 L8.5 0.5" fill="none" stroke="#fff" stroke-width="1"/></svg></div>
<div class="t " style="left:1162px;top:726.5px;line-height:20px;height:20px;color:#333;font-size:15px">13</div>
<div class="t " style="left:1262px;top:726.5px;line-height:20px;height:20px;color:#333;font-size:15px">68</div>
<div class="t" style="left:1362px;top:726px;line-height:20px;height:20px;color:#333;font-size:15px">55<svg style="display:inline-block;vertical-align:-1px;margin-left:11px" width="12" height="12" viewBox="0 0 12 12"><path d="M0.7 3 V11.3 H11.3 V3 C11.3 1.5 10.5 0.7 9 0.7 H3 C1.5 0.7 0.7 1.5 0.7 3z M0.7 3.2 H11.3 M6 5.5 V9.8 M3.8 7.6 H8.2" fill="none" stroke="#7b62f0" stroke-width="1.2"/></svg></div>
<div class="a" style="left:422px;top:777px;width:1216px;height:80px;background:#fafafa"></div>
<div class="cb" style="left:439px;top:809px"></div>
<div class="t " style="left:482px;top:806.0px;line-height:20px;height:20px;color:#333;font-size:15px">21</div>
<div class="img" style="left:572px;top:785px;background:#7f96ae"><span>示例图</span></div>
<div class="t " style="left:648px;top:785.0px;line-height:20px;height:20px;color:#333;font-size:14px;letter-spacing:-0.013px">CACUSS B0520帽子男百搭潮流棒球帽女休闲户外鸭...</div>
<div class="t " style="left:648px;top:804.0px;line-height:20px;height:20px;color:#8c8c8c;font-size:12px;letter-spacing:0.367px">百搭潮流棒球帽</div>
<div class="t " style="left:1012px;top:796.0px;line-height:20px;height:20px;color:#333;font-size:15px">69.00</div>
<div class="tag" style="left:1012px;top:818px">多规格<svg width="9" height="5" viewBox="0 0 9 5"><path d="M0.5 0.5 L4.5 4.3 L8.5 0.5" fill="none" stroke="#fff" stroke-width="1"/></svg></div>
<div class="t " style="left:1162px;top:806.5px;line-height:20px;height:20px;color:#333;font-size:15px">3</div>
<div class="t " style="left:1262px;top:806.5px;line-height:20px;height:20px;color:#333;font-size:15px">20</div>
<div class="t" style="left:1362px;top:806px;line-height:20px;height:20px;color:#333;font-size:15px">33<svg style="display:inline-block;vertical-align:-1px;margin-left:11px" width="12" height="12" viewBox="0 0 12 12"><path d="M0.7 3 V11.3 H11.3 V3 C11.3 1.5 10.5 0.7 9 0.7 H3 C1.5 0.7 0.7 1.5 0.7 3z M0.7 3.2 H11.3 M6 5.5 V9.8 M3.8 7.6 H8.2" fill="none" stroke="#7b62f0" stroke-width="1.2"/></svg></div>
<div class="cb" style="left:439px;top:889px"></div>
<div class="t " style="left:482px;top:886.0px;line-height:20px;height:20px;color:#333;font-size:15px">19</div>
<div class="img" style="left:572px;top:865px;background:#d9c9a7"><span>示例图</span></div>
<div class="t " style="left:648px;top:865.0px;line-height:20px;height:20px;color:#333;font-size:14px;letter-spacing:0.381px">Apple iPhone 13 Pro Max (A2644) 256GB 苍岭绿...</div>
<div class="t " style="left:648px;top:884.0px;line-height:20px;height:20px;color:#8c8c8c;font-size:12px;letter-spacing:0.304px">Apple iPhone 13 Pro Max (A2644) 256GB 苍岭绿色 支持移...</div>
<div class="t " style="left:1012px;top:886.0px;line-height:20px;height:20px;color:#333;font-size:15px">7980.00</div>
<div class="t " style="left:1162px;top:886.5px;line-height:20px;height:20px;color:#333;font-size:15px">1</div>
<div class="t " style="left:1262px;top:886.5px;line-height:20px;height:20px;color:#333;font-size:15px">56</div>
<div class="t" style="left:1362px;top:886px;line-height:20px;height:20px;color:#333;font-size:15px">19<svg style="display:inline-block;vertical-align:-1px;margin-left:11px" width="12" height="12" viewBox="0 0 12 12"><path d="M0.7 3 V11.3 H11.3 V3 C11.3 1.5 10.5 0.7 9 0.7 H3 C1.5 0.7 0.7 1.5 0.7 3z M0.7 3.2 H11.3 M6 5.5 V9.8 M3.8 7.6 H8.2" fill="none" stroke="#7b62f0" stroke-width="1.2"/></svg></div>
<div class="a" style="left:422px;top:937px;width:1216px;height:80px;background:#fafafa"></div>
<div class="cb" style="left:439px;top:969px"></div>
<div class="t " style="left:482px;top:966.0px;line-height:20px;height:20px;color:#333;font-size:15px">18</div>
<div class="img" style="left:572px;top:945px;background:#e8e2d6"><span>示例图</span></div>
<div class="t " style="left:648px;top:945.0px;line-height:20px;height:20px;color:#333;font-size:14px;letter-spacing:0.187px">Apple Watch Series 7 智能手表GPS款41 毫米星光...</div>
<div class="t " style="left:648px;top:964.0px;line-height:20px;height:20px;color:#8c8c8c;font-size:12px;letter-spacing:-0.133px">智能手表GPS</div>
<div class="t " style="left:1012px;top:956.0px;line-height:20px;height:20px;color:#333;font-size:15px">2999.00</div>
<div class="tag" style="left:1012px;top:978px">多规格<svg width="9" height="5" viewBox="0 0 9 5"><path d="M0.5 0.5 L4.5 4.3 L8.5 0.5" fill="none" stroke="#fff" stroke-width="1"/></svg></div>
<div class="t " style="left:1162px;top:966.5px;line-height:20px;height:20px;color:#333;font-size:15px">0</div>
<div class="t " style="left:1262px;top:966.5px;line-height:20px;height:20px;color:#333;font-size:15px">71</div>
<div class="t" style="left:1362px;top:966px;line-height:20px;height:20px;color:#333;font-size:15px">59<svg style="display:inline-block;vertical-align:-1px;margin-left:11px" width="12" height="12" viewBox="0 0 12 12"><path d="M0.7 3 V11.3 H11.3 V3 C11.3 1.5 10.5 0.7 9 0.7 H3 C1.5 0.7 0.7 1.5 0.7 3z M0.7 3.2 H11.3 M6 5.5 V9.8 M3.8 7.6 H8.2" fill="none" stroke="#7b62f0" stroke-width="1.2"/></svg></div>
<div class="a" style="left:1386px;top:176px;width:12px;height:841px;background:linear-gradient(to left,rgba(0,0,0,.09),rgba(0,0,0,.03) 40%,rgba(0,0,0,0))"></div>
<div class="a" style="left:1398px;top:176px;width:240px;height:41px;background:#f4f4f4"></div>
<div class="t " style="left:1410px;top:186.0px;line-height:20px;height:20px;color:#555;font-size:14px">操作</div>
<div class="a" style="left:1398px;top:217px;width:240px;height:80px;background:#fff"></div>
<div class="st on" style="left:1413px;top:245px">上架中<svg width="9" height="5" viewBox="0 0 9 5"><path d="M0.5 0.5 L4.5 4.3 L8.5 0.5" fill="none" stroke="currentColor" stroke-width="1"/></svg></div>
<div class="t " style="left:1493px;top:247.0px;line-height:20px;height:20px;color:#7b62f0;font-size:14px">编辑</div>
<div class="t " style="left:1538px;top:247.0px;line-height:20px;height:20px;color:#7b62f0;font-size:14px">复制</div>
<div class="t " style="left:1584px;top:247.0px;line-height:20px;height:20px;color:#f56c6c;font-size:14px">删除</div>
<div class="a" style="left:1398px;top:297px;width:240px;height:80px;background:#fafafa"></div>
<div class="st on" style="left:1413px;top:325px">上架中<svg width="9" height="5" viewBox="0 0 9 5"><path d="M0.5 0.5 L4.5 4.3 L8.5 0.5" fill="none" stroke="currentColor" stroke-width="1"/></svg></div>
<div class="t " style="left:1493px;top:327.0px;line-height:20px;height:20px;color:#7b62f0;font-size:14px">编辑</div>
<div class="t " style="left:1538px;top:327.0px;line-height:20px;height:20px;color:#7b62f0;font-size:14px">复制</div>
<div class="t " style="left:1584px;top:327.0px;line-height:20px;height:20px;color:#f56c6c;font-size:14px">删除</div>
<div class="a" style="left:1398px;top:377px;width:240px;height:80px;background:#fff"></div>
<div class="st on" style="left:1413px;top:405px">上架中<svg width="9" height="5" viewBox="0 0 9 5"><path d="M0.5 0.5 L4.5 4.3 L8.5 0.5" fill="none" stroke="currentColor" stroke-width="1"/></svg></div>
<div class="t " style="left:1493px;top:407.0px;line-height:20px;height:20px;color:#7b62f0;font-size:14px">编辑</div>
<div class="t " style="left:1538px;top:407.0px;line-height:20px;height:20px;color:#7b62f0;font-size:14px">复制</div>
<div class="t " style="left:1584px;top:407.0px;line-height:20px;height:20px;color:#f56c6c;font-size:14px">删除</div>
<div class="a" style="left:1398px;top:457px;width:240px;height:80px;background:#fafafa"></div>
<div class="st off" style="left:1413px;top:485px">已下架<svg width="9" height="5" viewBox="0 0 9 5"><path d="M0.5 0.5 L4.5 4.3 L8.5 0.5" fill="none" stroke="currentColor" stroke-width="1"/></svg></div>
<div class="t " style="left:1493px;top:487.0px;line-height:20px;height:20px;color:#7b62f0;font-size:14px">编辑</div>
<div class="t " style="left:1538px;top:487.0px;line-height:20px;height:20px;color:#7b62f0;font-size:14px">复制</div>
<div class="t " style="left:1584px;top:487.0px;line-height:20px;height:20px;color:#f56c6c;font-size:14px">删除</div>
<div class="a" style="left:1398px;top:537px;width:240px;height:80px;background:#fff"></div>
<div class="st on" style="left:1413px;top:565px">上架中<svg width="9" height="5" viewBox="0 0 9 5"><path d="M0.5 0.5 L4.5 4.3 L8.5 0.5" fill="none" stroke="currentColor" stroke-width="1"/></svg></div>
<div class="t " style="left:1493px;top:567.0px;line-height:20px;height:20px;color:#7b62f0;font-size:14px">编辑</div>
<div class="t " style="left:1538px;top:567.0px;line-height:20px;height:20px;color:#7b62f0;font-size:14px">复制</div>
<div class="t " style="left:1584px;top:567.0px;line-height:20px;height:20px;color:#f56c6c;font-size:14px">删除</div>
<div class="a" style="left:1398px;top:617px;width:240px;height:80px;background:#fafafa"></div>
<div class="st on" style="left:1413px;top:645px">上架中<svg width="9" height="5" viewBox="0 0 9 5"><path d="M0.5 0.5 L4.5 4.3 L8.5 0.5" fill="none" stroke="currentColor" stroke-width="1"/></svg></div>
<div class="t " style="left:1493px;top:647.0px;line-height:20px;height:20px;color:#7b62f0;font-size:14px">编辑</div>
<div class="t " style="left:1538px;top:647.0px;line-height:20px;height:20px;color:#7b62f0;font-size:14px">复制</div>
<div class="t " style="left:1584px;top:647.0px;line-height:20px;height:20px;color:#f56c6c;font-size:14px">删除</div>
<div class="a" style="left:1398px;top:697px;width:240px;height:80px;background:#fff"></div>
<div class="st on" style="left:1413px;top:725px">上架中<svg width="9" height="5" viewBox="0 0 9 5"><path d="M0.5 0.5 L4.5 4.3 L8.5 0.5" fill="none" stroke="currentColor" stroke-width="1"/></svg></div>
<div class="t " style="left:1493px;top:727.0px;line-height:20px;height:20px;color:#7b62f0;font-size:14px">编辑</div>
<div class="t " style="left:1538px;top:727.0px;line-height:20px;height:20px;color:#7b62f0;font-size:14px">复制</div>
<div class="t " style="left:1584px;top:727.0px;line-height:20px;height:20px;color:#f56c6c;font-size:14px">删除</div>
<div class="a" style="left:1398px;top:777px;width:240px;height:80px;background:#fafafa"></div>
<div class="st on" style="left:1413px;top:805px">上架中<svg width="9" height="5" viewBox="0 0 9 5"><path d="M0.5 0.5 L4.5 4.3 L8.5 0.5" fill="none" stroke="currentColor" stroke-width="1"/></svg></div>
<div class="t " style="left:1493px;top:807.0px;line-height:20px;height:20px;color:#7b62f0;font-size:14px">编辑</div>
<div class="t " style="left:1538px;top:807.0px;line-height:20px;height:20px;color:#7b62f0;font-size:14px">复制</div>
<div class="t " style="left:1584px;top:807.0px;line-height:20px;height:20px;color:#f56c6c;font-size:14px">删除</div>
<div class="a" style="left:1398px;top:857px;width:240px;height:80px;background:#fff"></div>
<div class="st on" style="left:1413px;top:885px">上架中<svg width="9" height="5" viewBox="0 0 9 5"><path d="M0.5 0.5 L4.5 4.3 L8.5 0.5" fill="none" stroke="currentColor" stroke-width="1"/></svg></div>
<div class="t " style="left:1493px;top:887.0px;line-height:20px;height:20px;color:#7b62f0;font-size:14px">编辑</div>
<div class="t " style="left:1538px;top:887.0px;line-height:20px;height:20px;color:#7b62f0;font-size:14px">复制</div>
<div class="t " style="left:1584px;top:887.0px;line-height:20px;height:20px;color:#f56c6c;font-size:14px">删除</div>
<div class="a" style="left:1398px;top:937px;width:240px;height:80px;background:#fafafa"></div>
<div class="st on" style="left:1413px;top:965px">上架中<svg width="9" height="5" viewBox="0 0 9 5"><path d="M0.5 0.5 L4.5 4.3 L8.5 0.5" fill="none" stroke="currentColor" stroke-width="1"/></svg></div>
<div class="t " style="left:1493px;top:967.0px;line-height:20px;height:20px;color:#7b62f0;font-size:14px">编辑</div>
<div class="t " style="left:1538px;top:967.0px;line-height:20px;height:20px;color:#7b62f0;font-size:14px">复制</div>
<div class="t " style="left:1584px;top:967.0px;line-height:20px;height:20px;color:#f56c6c;font-size:14px">删除</div>
<div class="t" style="left:744px;top:624px;line-height:38px;height:38px;font-size:33px;font-weight:bold;color:#ececec;-webkit-text-stroke:1.8px #ececec;mix-blend-mode:multiply;letter-spacing:7px;transform:skewX(-16deg) scaleY(.92);transform-origin:0 100%">刀客源码网</div>
<div class="a" style="left:241px;top:1215px;width:1417px;height:56px;background:#fff;border-radius:4px;box-shadow:0 -4px 12px rgba(0,0,0,.05)"></div>
<div class="t " style="left:261px;top:1233.0px;line-height:20px;height:20px;color:#333;font-size:14px">已选择 0 项</div>
<div class="a" style="left:346px;top:1227px;width:60px;height:32px;border-radius:4px;background:#fab6b6;color:#fff;font-size:14px;line-height:32px;text-align:center">删除</div>
<div class="a" style="left:418px;top:1227px;width:60px;height:32px;border-radius:4px;background:#b3e19d;color:#fff;font-size:14px;line-height:32px;text-align:center">上架</div>
<div class="a" style="left:490px;top:1227px;width:60px;height:32px;border-radius:4px;background:#fab6b6;color:#fff;font-size:14px;line-height:32px;text-align:center">下架</div>
<div class="a" style="left:562px;top:1227px;width:60px;height:32px;border-radius:4px;background:#c8c9cc;color:#fff;font-size:14px;line-height:32px;text-align:center">隐藏</div>
<div class="t " style="left:1151px;top:1233.0px;line-height:20px;height:20px;color:#555;font-size:14px">共 23 条</div>
<div class="a" style="left:1220px;top:1227px;width:128px;height:32px;border:1px solid #dcdfe6;border-radius:4px;background:#fff"></div>
<div class="t " style="left:1248px;top:1233.0px;line-height:20px;height:20px;color:#555;font-size:14px">10条/页</div>
<div class="a" style="left:1326px;top:1237px;width:7px;height:7px;border-right:1px solid #c0c4cc;border-bottom:1px solid #c0c4cc;transform:rotate(45deg)"></div>
<div class="a" style="left:1378px;top:1239px;width:6px;height:6px;border-left:1px solid #c0c4cc;border-bottom:1px solid #c0c4cc;transform:rotate(45deg)"></div>
<div class="t " style="left:1407px;top:1233.0px;line-height:20px;height:20px;color:#7b62f0;font-size:15px;font-weight:bold">1</div>
<div class="t " style="left:1439px;top:1233.0px;line-height:20px;height:20px;color:#333;font-size:15px">2</div>
<div class="t " style="left:1471px;top:1233.0px;line-height:20px;height:20px;color:#333;font-size:15px">3</div>
<div class="a" style="left:1503px;top:1239px;width:6px;height:6px;border-right:1px solid #555;border-top:1px solid #555;transform:rotate(45deg)"></div>
<div class="t " style="left:1540px;top:1233.0px;line-height:20px;height:20px;color:#555;font-size:14px">前往</div>
<div class="a" style="left:1568px;top:1230px;width:60px;height:28px;border:1px solid #dcdfe6;border-radius:4px;background:#fff"></div>
<div class="t " style="left:1592px;top:1233.0px;line-height:20px;height:20px;color:#333;font-size:14px">1</div>
<div class="a" style="left:1613px;top:1176px;width:40px;height:40px;border-radius:50%;background:#fff;box-shadow:0 0 6px rgba(0,0,0,.08)"></div>
<svg class="a" style="left:1626px;top:1188px" width="14" height="16" viewBox="0 0 14 16"><path d="M7 0.5 C3.8 0.5 2.3 2.8 2.3 5.5 V9.5 L0.5 12 H13.5 L11.7 9.5 V5.5 C11.7 2.8 10.2 0.5 7 0.5z" fill="#7b62f0"/><path d="M5 13.3 H9 C9 14.6 8.2 15.5 7 15.5 C5.8 15.5 5 14.6 5 13.3z" fill="#7b62f0"/></svg>
<div class="a" style="left:1613px;top:1225px;width:40px;height:40px;border-radius:50%;background:#fff;box-shadow:0 0 6px rgba(0,0,0,.08)"></div>
<svg class="a" style="left:1625px;top:1237px" width="17" height="16" viewBox="0 0 17 16"><path d="M8.5 0.5 C4 0.5 0.5 3.6 0.5 7.5 C0.5 9.5 1.3 11 2.8 12.3 L1.8 15.5 L5.5 13.8 C6.4 14.2 7.4 14.4 8.5 14.4 C13 14.4 16.5 11.3 16.5 7.5 C16.5 3.6 13 0.5 8.5 0.5z" fill="#7b62f0"/><circle cx="5.2" cy="7.5" r="1.1" fill="#fff"/><circle cx="8.5" cy="7.5" r="1.1" fill="#fff"/><circle cx="11.8" cy="7.5" r="1.1" fill="#fff"/></svg>
<div class="a" style="left:1666px;top:-5px;width:10px;height:8px;border-radius:50%;background:#333"></div>
<div class="t " style="left:1470px;top:1246.0px;line-height:26px;height:26px;font-size:22px;font-weight:bold;color:#f8c6c6;-webkit-text-stroke:1.3px #f8c6c6;letter-spacing:2.1px;transform:scaleX(1.12);transform-origin:0 50%">www.52xb.cn</div>
</body></html>
